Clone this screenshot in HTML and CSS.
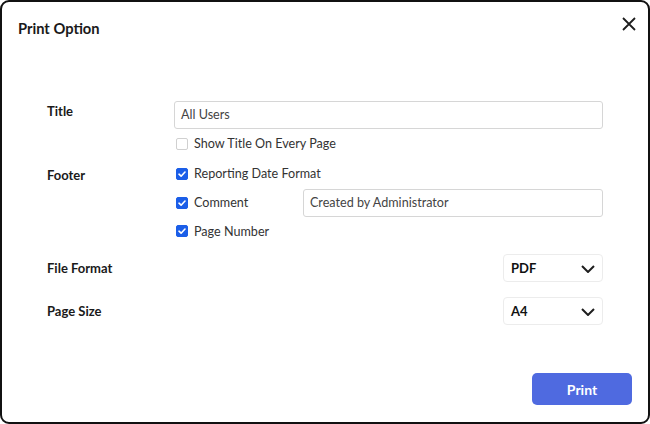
FILE: index.html
```html
<!DOCTYPE html>
<html>
<head>
<meta charset="utf-8">
<link rel="stylesheet" href="styles.css">
</head>
<body>
<div class="dialog">
  <div class="header">
    <h1 class="heading">Print Option</h1>
    <button class="close" aria-label="Close">
      <svg width="14" height="14" viewBox="0 0 14 14"><path d="M1 1L13 13M13 1L1 13" stroke="#1e1e1e" stroke-width="1.8" fill="none"/></svg>
    </button>
  </div>
  <div class="form">
    <div class="section sec-title">
      <div class="label lbl-title">Title</div>
      <div class="controls">
        <div class="input">All Users</div>
        <div class="cb-row"><span class="cb"></span><span class="cb-text">Show Title On Every Page</span></div>
      </div>
    </div>
    <div class="section sec-footer">
      <div class="label lbl-footer">Footer</div>
      <div class="controls">
        <div class="cb-row"><span class="cb checked"><svg width="12" height="12" viewBox="0 0 12 12"><path d="M3 6.2L5.1 8.2L9 4" stroke="#fff" stroke-width="1.6" fill="none" stroke-linecap="round" stroke-linejoin="round"/></svg></span><span class="cb-text">Reporting Date Format</span></div>
        <div class="cb-row"><span class="cb checked"><svg width="12" height="12" viewBox="0 0 12 12"><path d="M3 6.2L5.1 8.2L9 4" stroke="#fff" stroke-width="1.6" fill="none" stroke-linecap="round" stroke-linejoin="round"/></svg></span><span class="cb-text cb-comment">Comment</span><div class="input input-comment">Created by Administrator</div></div>
        <div class="cb-row cb-last"><span class="cb checked"><svg width="12" height="12" viewBox="0 0 12 12"><path d="M3 6.2L5.1 8.2L9 4" stroke="#fff" stroke-width="1.6" fill="none" stroke-linecap="round" stroke-linejoin="round"/></svg></span><span class="cb-text">Page Number</span></div>
      </div>
    </div>
    <div class="section sec-format">
      <div class="label">File Format</div>
      <div class="controls controls-end">
        <div class="select"><span>PDF</span><svg width="14" height="8" viewBox="0 0 14 8"><path d="M1 1L7 7L13 1" stroke="#1e1e1e" stroke-width="2" fill="none"/></svg></div>
      </div>
    </div>
    <div class="section sec-size">
      <div class="label">Page Size</div>
      <div class="controls controls-end">
        <div class="select"><span>A4</span><svg width="14" height="8" viewBox="0 0 14 8"><path d="M1 1L7 7L13 1" stroke="#1e1e1e" stroke-width="2" fill="none"/></svg></div>
      </div>
    </div>
  </div>
  <div class="footer">
    <button class="print">Print</button>
  </div>
</div>
</body>
</html>
```
FILE: styles.css
```css
* { box-sizing: border-box; }
html, body { margin: 0; padding: 0; background: #fff; }
body { font-family: Lato, "Liberation Sans", sans-serif; color: #222; }
.dialog {
  width: 650px;
  height: 424px;
  border: 2px solid #111;
  border-radius: 9px;
  background: #fff;
  display: flex;
  flex-direction: column;
}
.header {
  display: flex;
  align-items: center;
  justify-content: space-between;
  height: 50px;
  padding: 2px 12px 0 16px;
}
.heading {
  margin: 0;
  font-size: 14.7px;
  font-weight: 700;
  color: #1a1a1a;
}
.close {
  border: 0;
  background: none;
  padding: 0;
  width: 14px;
  height: 14px;
  display: flex;
  margin-top: -8px;
}
.form {
  padding: 49px 45px 0 45px;
  display: flex;
  flex-direction: column;
}
.section {
  display: flex;
}
.label {
  width: 127px;
  flex: none;
  font-size: 13px;
  font-weight: 700;
  line-height: 28px;
  color: #1a1a1a;
}
.lbl-title { line-height: 20px; }
.lbl-footer { line-height: 32px; }
.controls { flex: 1; display: flex; flex-direction: column; }
.controls-end { align-items: flex-end; }
.sec-footer { margin-top: 1px; }
.sec-format { margin-top: 9px; }
.sec-size { margin-top: 15px; }
.input {
  height: 28px;
  border: 1px solid #d6d6d6;
  border-radius: 3px;
  padding: 0 6px;
  font-size: 12.6px;
  line-height: 26px;
  color: #444;
}
.cb-row {
  display: flex;
  align-items: center;
  height: 29px;
  padding-left: 2px;
  font-size: 12.6px;
  color: #333;
}
.cb-row.cb-last { height: 28px; }
.cb {
  width: 12px;
  height: 12px;
  border: 1px solid #d0d0d0;
  border-radius: 2px;
  flex: none;
  display: flex;
  margin-right: 6px;
}
.cb.checked { background: #1b5ee8; border-color: #1b5ee8; }
.cb.checked svg { margin: -1px; }
.cb-comment { width: 109px; }
.input-comment { flex: 1; }
.select {
  width: 100px;
  height: 28px;
  border: 1px solid #ececec;
  border-radius: 4px;
  display: flex;
  align-items: center;
  justify-content: space-between;
  padding: 0 7px 0 7px;
  font-size: 13px;
  font-weight: 700;
  color: #111;
}
.select svg { margin-top: 2px; }
.footer {
  margin-top: auto;
  display: flex;
  justify-content: flex-end;
  padding: 0 16px 17px 0;
}
.print {
  width: 100px;
  height: 32px;
  border: 0;
  border-radius: 5px;
  background: #4f6ae0;
  color: #fff;
  font-family: Lato, "Liberation Sans", sans-serif;
  font-size: 14px;
  font-weight: 700;
}
```
